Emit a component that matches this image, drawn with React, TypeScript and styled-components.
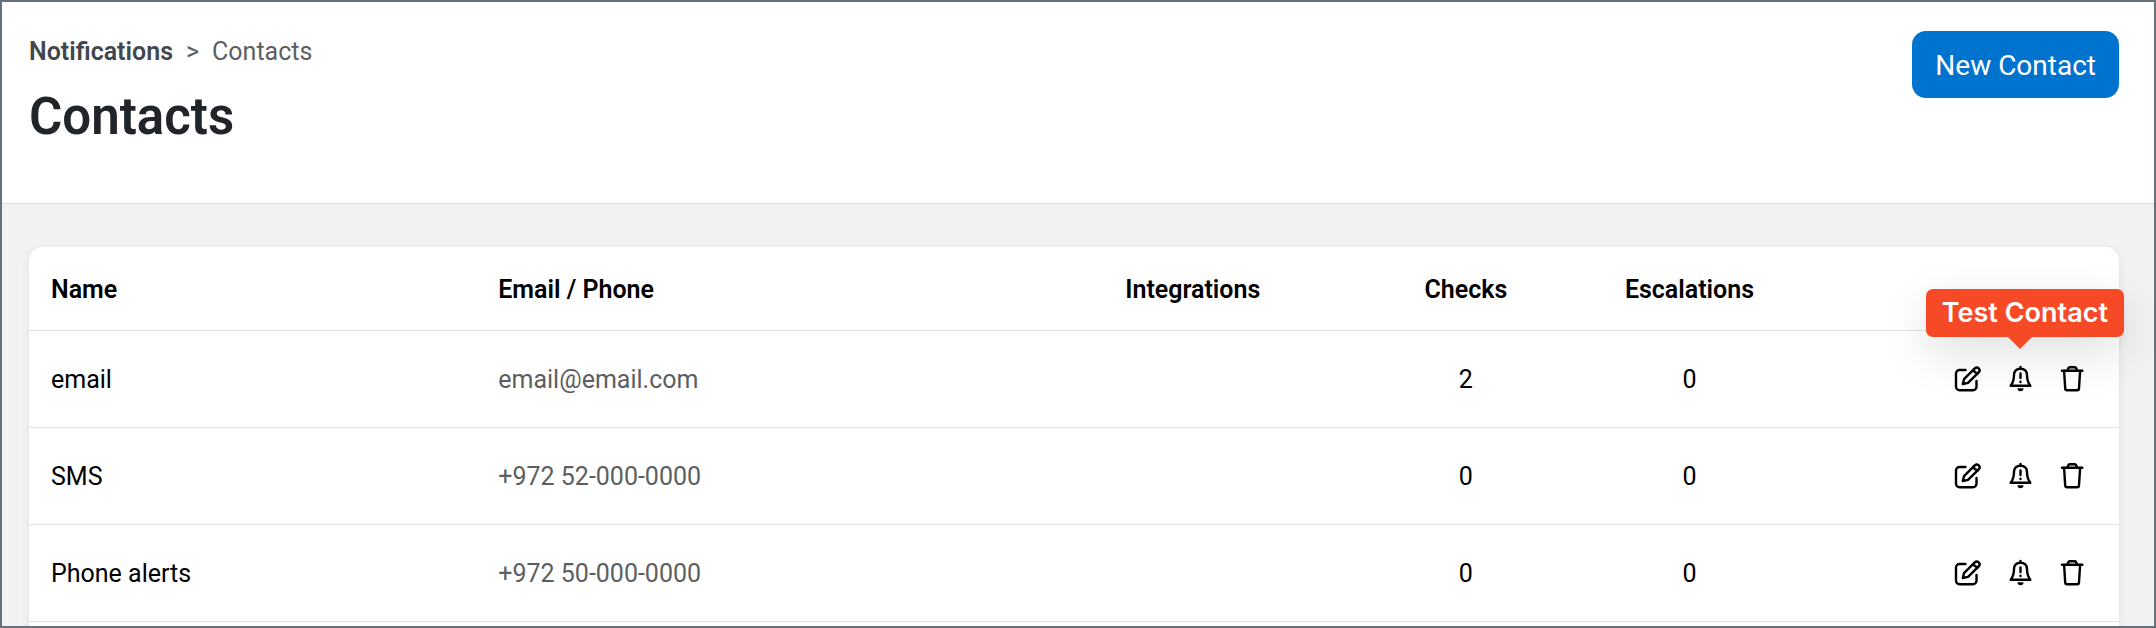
import React from 'react';
import styled, { createGlobalStyle } from 'styled-components';

const GlobalStyle = createGlobalStyle`
  *, *::before, *::after { box-sizing: border-box; }
  body {
    margin: 0;
    font-family: Roboto, "Liberation Sans", sans-serif;
    font-size: 25px;
    line-height: 32px;
    color: #000;
  }
`;

const Page = styled.div`
  display: flex;
  flex-direction: column;
  min-height: 100vh;
  border: 2px solid #66717b;
  background: #f2f2f2;
  overflow: hidden;
`;

const Header = styled.header`
  display: flex;
  justify-content: space-between;
  align-items: flex-start;
  padding: 29px 35px 56px 27px;
  background: #fff;
  border-bottom: 1px solid #dfdfdf;
`;

const Breadcrumb = styled.nav`
  display: flex;
  gap: 13px;
  padding-top: 5px;
  color: #5c5f62;
`;

const CrumbLink = styled.a`
  font-weight: 600;
  color: #42474b;
  text-decoration: none;
`;

const Title = styled.h1`
  margin: 19px 0 0;
  font-size: 51px;
  line-height: 60px;
  font-weight: 600;
  color: #212529;
`;

const PrimaryButton = styled.button`
  padding: 18px 23px 15px;
  border: 0;
  border-radius: 14px;
  background: #0073cf;
  color: #fff;
  font: inherit;
  font-size: 28px;
  line-height: 34px;
`;

const Main = styled.main`
  display: flex;
  flex: 1;
  padding: 43px 35px 0 27px;
`;

const Card = styled.section`
  flex: 1;
  padding-bottom: 4px;
  border-radius: 14px 14px 0 0;
  background: #fff;
  box-shadow: 0 2px 8px rgba(0, 0, 0, 0.08);
`;

const Table = styled.table`
  width: 100%;
  table-layout: fixed;
  border-collapse: separate;
  border-spacing: 0;
`;

const Column = styled.col<{ $share?: string }>`
  width: ${({ $share }) => $share ?? 'auto'};
`;

type Align = 'left' | 'center';

const HeadCell = styled.th<{ $align?: Align }>`
  height: 84px;
  padding: 3px 22px 0;
  border-bottom: 1px solid #dee2e6;
  font-weight: 600;
  text-align: ${({ $align }) => $align ?? 'left'};
`;

const Cell = styled.td<{ $align?: Align; $muted?: boolean }>`
  height: 97px;
  padding: 2px 22px 0;
  border-bottom: 1px solid #dfe1e3;
  text-align: ${({ $align }) => $align ?? 'left'};
  color: ${({ $muted }) => ($muted ? '#5c5f62' : '#000')};
`;

const ActionsCell = styled(Cell)`
  padding: 0 22px;
`;

const Actions = styled.div`
  display: flex;
  justify-content: flex-end;
  gap: 2px;
`;

const ActionItem = styled.div`
  position: relative;
`;

const IconButton = styled.button`
  display: flex;
  align-items: center;
  justify-content: center;
  width: 50px;
  height: 50px;
  padding: 0;
  border: 0;
  background: none;
  color: #000;
`;

const Tooltip = styled.div`
  position: absolute;
  right: -79px;
  bottom: 67px;
  padding: 8px 16px;
  border-radius: 7px;
  background: #f64926;
  color: #fff;
  font-family: Inter, "Liberation Sans", sans-serif;
  font-size: 27px;
  font-weight: 600;
  white-space: nowrap;
  box-shadow: 0 16px 48px rgba(0, 0, 0, 0.13);

  &::after {
    content: '';
    position: absolute;
    top: 100%;
    right: 92px;
    border: 12px solid transparent;
    border-top-color: #f64926;
    border-bottom: 0;
  }
`;

const Icon = styled.svg`
  width: 28px;
  height: 28px;
  fill: none;
  stroke: currentColor;
  stroke-width: 2.4;
  stroke-linecap: round;
  stroke-linejoin: round;
`;

const EditIcon = () => (
  <Icon viewBox="0 0 28 28" aria-hidden="true">
    <path d="M11.500 5H5.500A3.500 3.500 0 0 0 2 8.500v13.300a3.500 3.500 0 0 0 3.500 3.500H19a3.500 3.500 0 0 0 3.500-3.500V16" />
    <path d="M8.800 19 10 14.200 20.800 3.400a2.700 2.700 0 0 1 3.900 3.900L14 17.800Z" />
    <path d="M19.600 4.600 20.600 7 23.600 8.400" />
  </Icon>
);

const BellIcon = () => (
  <Icon viewBox="0 0 28 28" aria-hidden="true">
    <path d="M14.500 2V3.700M14.500 3.700C10.500 3.700 8 6.300 8 10c0 5-.8 7.500-3.300 10.700h19.600C21.800 17.500 21 15 21 10c0-3.700-2.500-6.300-6.500-6.300Z" />
    <path d="M14.500 8.500V13M14.500 16.800v.3" />
    <path d="M11.500 23.300h6a3 3 0 0 1-6 0Z" fill="currentColor" stroke="none" />
  </Icon>
);

const TrashIcon = () => (
  <Icon viewBox="0 0 28 28" aria-hidden="true">
    <path d="M4 5.700h20.300M9.300 5.300 10.600 2.900Q11 2.200 12 2.200h4.500q1 0 1.400.7l1.300 2.400" />
    <path d="M6.100 6 7.200 23.300a2 2 0 0 0 2 2h9.800a2 2 0 0 0 2-2L22.100 6" />
  </Icon>
);

interface Contact {
  name: string;
  address: string;
  checks: number;
  escalations: number;
  showTip?: boolean;
}

const contacts: Contact[] = [
  { name: 'email', address: 'email@email.com', checks: 2, escalations: 0, showTip: true },
  { name: 'SMS', address: '+972 52-000-0000', checks: 0, escalations: 0 },
  { name: 'Phone alerts', address: '+972 50-000-0000', checks: 0, escalations: 0 },
];

const ContactRow = ({ contact }: { contact: Contact }) => (
  <tr>
    <Cell>{contact.name}</Cell>
    <Cell $muted>{contact.address}</Cell>
    <Cell />
    <Cell $align="center">{contact.checks}</Cell>
    <Cell $align="center">{contact.escalations}</Cell>
    <ActionsCell>
      <Actions>
        <IconButton type="button" aria-label="Edit contact"><EditIcon /></IconButton>
        <ActionItem>
          <IconButton type="button" aria-label="Test contact"><BellIcon /></IconButton>
          {contact.showTip && <Tooltip role="tooltip">Test Contact</Tooltip>}
        </ActionItem>
        <IconButton type="button" aria-label="Delete contact"><TrashIcon /></IconButton>
      </Actions>
    </ActionsCell>
  </tr>
);

export default function App() {
  return (
    <>
      <GlobalStyle />
      <Page>
        <Header>
          <div>
            <Breadcrumb aria-label="Breadcrumb">
              <CrumbLink href="#notifications">Notifications</CrumbLink>
              <span>&gt;</span>
              <span>Contacts</span>
            </Breadcrumb>
            <Title>Contacts</Title>
          </div>
          <PrimaryButton type="button">New Contact</PrimaryButton>
        </Header>
        <Main>
          <Card>
            <Table>
              <colgroup>
                <Column $share="21.4%" />
                <Column $share="30%" />
                <Column $share="12%" />
                <Column $share="10.7%" />
                <Column $share="10.7%" />
                <Column />
              </colgroup>
              <thead>
                <tr>
                  <HeadCell>Name</HeadCell>
                  <HeadCell>Email / Phone</HeadCell>
                  <HeadCell>Integrations</HeadCell>
                  <HeadCell $align="center">Checks</HeadCell>
                  <HeadCell $align="center">Escalations</HeadCell>
                  <HeadCell aria-label="Actions" />
                </tr>
              </thead>
              <tbody>
                {contacts.map((contact) => (
                  <ContactRow key={contact.name} contact={contact} />
                ))}
              </tbody>
            </Table>
          </Card>
        </Main>
      </Page>
    </>
  );
}
